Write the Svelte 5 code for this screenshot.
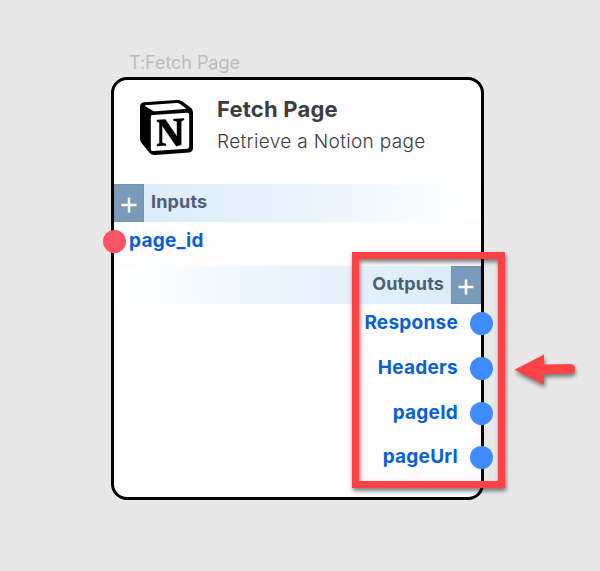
<script>
  const outputs = ['Response', 'Headers', 'pageId', 'pageUrl'];
</script>

<main class="canvas">
  <div class="tag">T:Fetch Page</div>
  <section class="node">
    <header>
      <svg class="logo" width="56" height="58" viewBox="0 0 56 58" aria-label="Notion">
        <path d="M5 2.3 38 0q3-.2 5 1.3l8.300 6Q54 9 54 12v36q0 4-4 4.400L16 55q-3.500.3-5.300-2L2.500 43Q1 41 1 38V7q0-4.300 4-4.700z" fill="#000" />
        <path d="M6.500 5.200 37.500 3q2-.1 3.500 1l5.500 4.100q1 .9-.7 1L16.500 11.200q-2 .1-3.500-1L6.200 6.300q-1.100-.9.300-1.100z" fill="#fff" />
        <path d="M13.500 14.900 48.200 12.800q2-.1 2 2v31.500q0 2.200-2 2.400L14 51.100q-2.200.1-2.200-2.200V16.900q0-1.900 1.700-2z" fill="#fff" />
        <path d="M18 20 26.300 19.400 38 36.500V21.400L34.500 20.500V19.100L45 18.500V19.800L42.200 21.300V44.800L37.300 46.300 23.100 25.500V42.700L27 43.900V45.400L18 46V44.600L20.400 43.300V22.500L18 21.600z" fill="#000" stroke="#000" stroke-width=".4" />
      </svg>
      <div class="heading">
        <h1>Fetch Page</h1>
        <p>Retrieve a Notion page</p>
      </div>
    </header>

    <div class="bar inputs">
      <span class="plus"><svg width="16" height="16" viewBox="0 0 16 16"><path d="M8 .5v15M.5 8h15" /></svg></span>
      <span class="label">Inputs</span>
    </div>
    <div class="port in"><i class="dot"></i><span>page_id</span></div>

    <div class="bar outputs">
      <span class="label">Outputs</span>
      <span class="plus"><svg width="16" height="16" viewBox="0 0 16 16"><path d="M8 .5v15M.5 8h15" /></svg></span>
    </div>
    {#each outputs as name}
      <div class="port out"><span>{name}</span><i class="dot"></i></div>
    {/each}
  </section>

  <div class="frame"></div>
  <svg class="arrow" width="80" height="50" viewBox="0 0 80 50">
    <path d="M4.500 19.700 34 4.500V14.500L60.500 14Q65 14.300 65 18.700T60.500 23.500L34 24V34.500z" />
  </svg>
</main>

<style>
  .canvas {
    position: relative;
    box-sizing: border-box;
    width: 600px;
    height: 571px;
    padding: 50px 0 0 111px;
    background: #e8e8e8;
    font-family: Inter, sans-serif;
    overflow: hidden;
  }
  .tag {
    height: 27px;
    padding-left: 18px;
    line-height: 26px;
    font-size: 18px;
    letter-spacing: -0.05px;
    color: #bcbcbc;
  }
  .node {
    box-sizing: border-box;
    width: 373px;
    height: 423px;
    border: 3px solid #000;
    border-radius: 16px;
    background: #fcfcfc;
  }
  header {
    display: flex;
    height: 104px;
  }
  .logo {
    margin: 20px 0 0 25px;
  }
  .heading {
    margin: 15px 0 0 22px;
    color: #3d3d3f;
    white-space: nowrap;
  }
  h1 {
    margin: 0;
    font-size: 22px;
    line-height: 29px;
    font-weight: 650;
    letter-spacing: 0.2px;
  }
  p {
    margin: 2px 0 0;
    font-size: 19px;
    line-height: 32px;
    font-weight: 300;
    letter-spacing: 0.35px;
  }
  .bar {
    display: flex;
    height: 38px;
    color: #4d6078;
    font-size: 18px;
    font-weight: 650;
    letter-spacing: 0.15px;
    line-height: 36px;
  }
  .inputs {
    background: linear-gradient(90deg, #d9eaf7, #e9f4fc 50%, #fff);
  }
  .bar.outputs {
    justify-content: flex-end;
    background: linear-gradient(270deg, #d9eaf7, #e9f4fc 50%, #fff);
  }
  .plus {
    box-sizing: border-box;
    display: flex;
    justify-content: center;
    align-items: center;
    width: 30px;
    height: 38px;
    padding-top: 3px;
    border: 1px solid #7094b2;
    background: #799bb7;
  }
  .plus path {
    fill: none;
    stroke: #fff;
    stroke-width: 2.5;
  }
  .inputs .label {
    margin-left: 7px;
  }
  .outputs .label {
    margin-right: 7px;
  }
  .port {
    display: flex;
    color: #0861d3;
    font-size: 19px;
    line-height: 37px;
    font-weight: 650;
    letter-spacing: 0.25px;
  }
  .port.in {
    height: 44px;
  }
  .port.out {
    height: 44.800px;
    justify-content: flex-end;
  }
  .dot {
    width: 23px;
    height: 23px;
    border-radius: 50%;
    margin-top: 8px;
  }
  .in .dot {
    margin-left: -11px;
    margin-right: 3px;
    background: #f75468;
  }
  .out .dot {
    margin-left: 12px;
    margin-right: -12px;
    background: #3d8bfd;
  }
  .frame {
    position: absolute;
    left: 352px;
    top: 252px;
    box-sizing: border-box;
    width: 153px;
    height: 236px;
    border: 7px solid #ff4245;
    filter: drop-shadow(1px 3px 2px rgba(0, 0, 0, 0.5));
  }
  .arrow {
    position: absolute;
    left: 510px;
    top: 350px;
    overflow: visible;
    filter: drop-shadow(1px 3px 2px rgba(0, 0, 0, 0.5));
  }
  .arrow path {
    fill: #ff4245;
  }
</style>
